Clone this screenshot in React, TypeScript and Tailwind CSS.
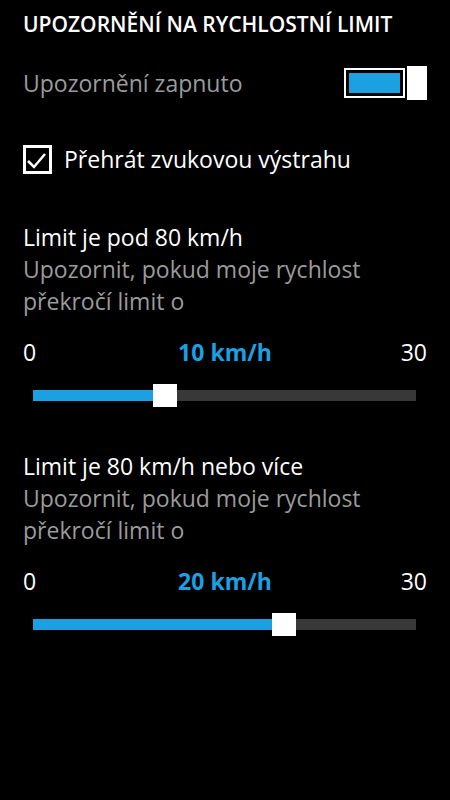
import React from 'react';

function Toggle() {
  return (
    <div className="flex items-center gap-[2px]">
      <div className="w-[61px] h-[30px] border-2 border-white p-[3px]">
        <div className="w-full h-full bg-[#1ba1e2]" />
      </div>
      <div className="w-[20px] h-[34px] bg-white" />
    </div>
  );
}

function Slider({ value, max }: { value: number; max: number }) {
  const frac = value / max;
  // thumb stays inside the track, so it travels (width - thumb)
  const left = `calc((100% - 24px) * ${frac})`;
  return (
    <div className="ml-[10px] w-[383px] h-[23px] relative flex items-center">
      <div className="w-full h-[11px] bg-[#383838] flex">
        <div className="h-full bg-[#1ba1e2]" style={{ width: `calc((100% - 24px) * ${frac} + 12px)` }} />
      </div>
      <div className="absolute top-0 w-[24px] h-[23px] bg-white" style={{ left }} />
    </div>
  );
}

function LimitSection({ title, value }: { title: string; value: number }) {
  return (
    <div>
      <p className="text-[23px] leading-[32px] text-white">{title}</p>
      <p className="text-[23px] leading-[32px] text-[#9b9b9b]">
        Upozornit, pokud moje rychlost
        <br />
        překročí limit o
      </p>
      <div className="mt-[19px] grid grid-cols-[1fr_auto_1fr] items-center text-[23px] leading-[32px] text-white">
        <span>0</span>
        <span className="font-bold text-[#1ba1e2]">{value} km/h</span>
        <span className="text-right">30</span>
      </div>
      <div className="mt-[16px]">
        <Slider value={value} max={30} />
      </div>
    </div>
  );
}

export default function App() {
  return (
    <div
      className="w-[450px] h-[800px] bg-black overflow-hidden px-[23px] pt-[11px]"
      style={{ fontFamily: '"Open Sans", sans-serif' }}
    >
      <h1 className="text-[21px] leading-[26px] font-semibold text-white">
        UPOZORNĚNÍ NA RYCHLOSTNÍ LIMIT
      </h1>

      <div className="mt-[29px] flex items-center justify-between">
        <span className="text-[23px] leading-[32px] text-[#9b9b9b]">Upozornění zapnuto</span>
        <Toggle />
      </div>

      <div className="mt-[43px] flex items-center gap-[12px]">
        <div className="w-[29px] h-[29px] border-[3px] border-white flex items-center justify-center">
          <svg width="23" height="23" viewBox="0 0 23 23" fill="none">
            <path d="M2 13 L8 19 L19 6" stroke="white" strokeWidth="2.5" />
          </svg>
        </div>
        <span className="text-[23px] leading-[32px] text-white">Přehrát zvukovou výstrahu</span>
      </div>

      <div className="mt-[46px]">
        <LimitSection title="Limit je pod 80 km/h" value={10} />
      </div>

      <div className="mt-[43px]">
        <LimitSection title="Limit je 80 km/h nebo více" value={20} />
      </div>
    </div>
  );
}
